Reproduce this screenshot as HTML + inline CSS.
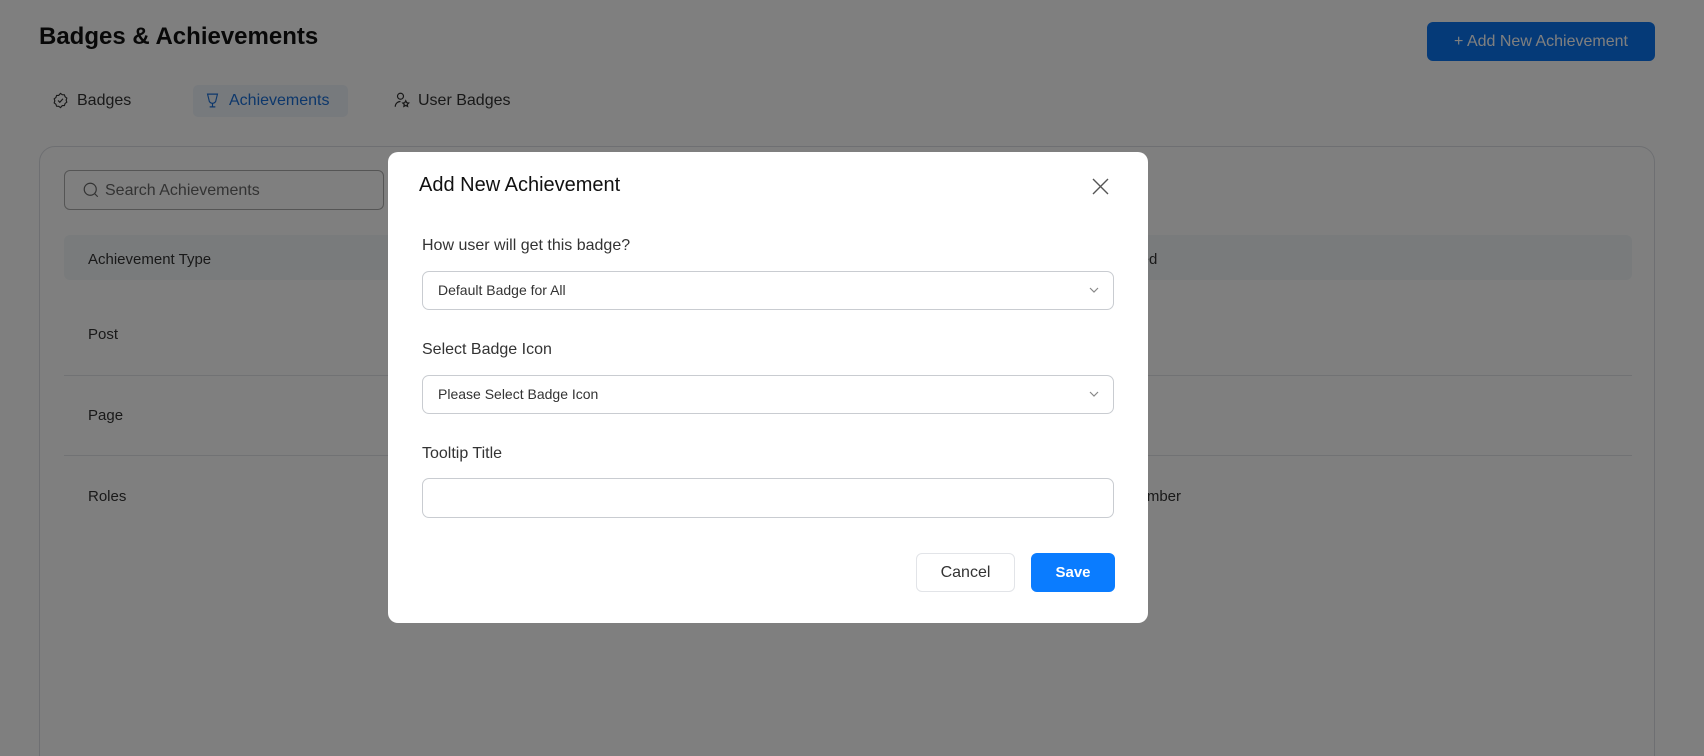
<!DOCTYPE html>
<html style="width:1704px;height:756px;overflow:hidden"><head><meta charset="utf-8"><style>
*{box-sizing:border-box;margin:0;padding:0}
body{width:1704px;height:756px;overflow:hidden;font-family:"Liberation Sans",sans-serif;background:#fff;position:relative;color:#1f2328}
.abs{position:absolute}
.overlay{position:fixed;left:0;top:0;width:1704px;height:756px;background:rgba(0,0,0,0.5)}
.sel{position:absolute;left:34px;width:692px;height:39px;border:1px solid #c9ccd1;border-radius:7px;font-size:14px;color:#333;padding-left:15px;line-height:37px}
.lbl{position:absolute;left:34px;font-size:16px;color:#333}
</style></head><body>
<div class="abs" style="left:39px;top:23px;font-size:24px;font-weight:bold;color:#111">Badges &amp; Achievements</div>
<div class="abs" style="left:1427px;top:22px;width:228px;height:39px;background:#0a74f0;border-radius:6px;color:#fff;font-size:16px;line-height:39px;text-align:center">+ Add New Achievement</div>
<svg class="abs" style="left:52px;top:92px" width="17" height="17" viewBox="0 0 24 24" fill="none" stroke="#333" stroke-width="1.6"><path d="M12 2l2.5 1.8 3 .1 1 2.9 2.4 1.8-.9 2.9.9 2.9-2.4 1.8-1 2.9-3 .1L12 22l-2.5-1.8-3-.1-1-2.9-2.4-1.8.9-2.9-.9-2.9 2.4-1.8 1-2.9 3-.1z"/><path d="M8.5 12l2.5 2.5 4.5-5"/></svg>
<div class="abs" style="left:77px;top:92px;font-size:16px;color:#333">Badges</div>
<div class="abs" style="left:193px;top:85px;width:155px;height:32px;background:#eef4fb;border-radius:5px"></div>
<svg class="abs" style="left:204px;top:92px" width="17" height="17" viewBox="0 0 24 24" fill="none" stroke="#1a6fd6" stroke-width="1.6"><path d="M5 3h14l-2 8a5 5 0 0 1-10 0z"/><path d="M12 16v5M8 21h8"/></svg>
<div class="abs" style="left:229px;top:92px;font-size:16px;color:#1a6fd6">Achievements</div>
<svg class="abs" style="left:393px;top:91px" width="18" height="18" viewBox="0 0 24 24" fill="none" stroke="#333" stroke-width="1.6"><circle cx="10" cy="7" r="4"/><path d="M3 21c0-4 3-7 7-7"/><path d="M17 13l1.3 2.6 2.7.4-2 1.9.5 2.7-2.5-1.3-2.5 1.3.5-2.7-2-1.9 2.7-.4z"/></svg>
<div class="abs" style="left:418px;top:92px;font-size:16px;color:#333">User Badges</div>
<div class="abs" style="left:39px;top:146px;width:1616px;height:630px;border:1px solid #dcdfe4;border-radius:16px"></div>
<div class="abs" style="left:64px;top:170px;width:320px;height:40px;border:1px solid #aaa;border-radius:6px"></div>
<svg class="abs" style="left:82px;top:181px" width="18" height="18" viewBox="0 0 24 24" fill="none" stroke="#666" stroke-width="1.6"><circle cx="11" cy="11" r="8"/><path d="M17 17l4 4"/></svg>
<div class="abs" style="left:105px;top:182px;font-size:16px;color:#666">Search Achievements</div>
<div class="abs" style="left:64px;top:235px;width:1568px;height:45px;background:#f3f6f9;border-radius:6px"></div>
<div class="abs" style="left:88px;top:251px;font-size:15px;color:#333">Achievement Type</div>
<div class="abs" style="left:1104px;top:251px;font-size:15px;color:#333">Created</div>
<div class="abs" style="left:88px;top:326px;font-size:15px;color:#333">Post</div>
<div class="abs" style="left:64px;top:375px;width:1568px;height:1px;background:#e2e5e9"></div>
<div class="abs" style="left:88px;top:407px;font-size:15px;color:#333">Page</div>
<div class="abs" style="left:64px;top:455px;width:1568px;height:1px;background:#e2e5e9"></div>
<div class="abs" style="left:88px;top:488px;font-size:15px;color:#333">Roles</div>
<div class="abs" style="left:1126px;top:488px;font-size:15px;color:#333">Member</div>
<div class="overlay"></div>
<div class="abs" style="left:388px;top:152px;width:760px;height:471px;background:#fff;border-radius:10px">
 <div class="abs" style="left:31px;top:22px;font-size:20px;color:#111">Add New Achievement</div>
 <svg class="abs" style="left:704px;top:26px" width="17" height="17" viewBox="0 0 17 17" stroke="#555" stroke-width="1.4"><path d="M1 1l15 15M16 1L1 16"/></svg>
 <div class="lbl" style="top:85px">How user will get this badge?</div>
 <div class="sel" style="top:119px">Default Badge for All<svg class="abs" style="right:14px;top:15px" width="10" height="7" viewBox="0 0 10 7" fill="none" stroke="#888" stroke-width="1.2"><path d="M1 1l4 4 4-4"/></svg></div>
 <div class="lbl" style="top:189px">Select Badge Icon</div>
 <div class="sel" style="top:223px">Please Select Badge Icon<svg class="abs" style="right:14px;top:15px" width="10" height="7" viewBox="0 0 10 7" fill="none" stroke="#888" stroke-width="1.2"><path d="M1 1l4 4 4-4"/></svg></div>
 <div class="lbl" style="top:293px">Tooltip Title</div>
 <div class="sel" style="top:326px;height:40px"></div>
 <div class="abs" style="left:528px;top:401px;width:99px;height:39px;border:1px solid #e2e4e8;border-radius:6px;font-size:16px;color:#333;text-align:center;line-height:37px">Cancel</div>
 <div class="abs" style="left:643px;top:401px;width:84px;height:39px;background:#0a7cff;border-radius:6px;font-size:15px;font-weight:bold;color:#fff;text-align:center;line-height:39px">Save</div>
</div>
</body></html>
